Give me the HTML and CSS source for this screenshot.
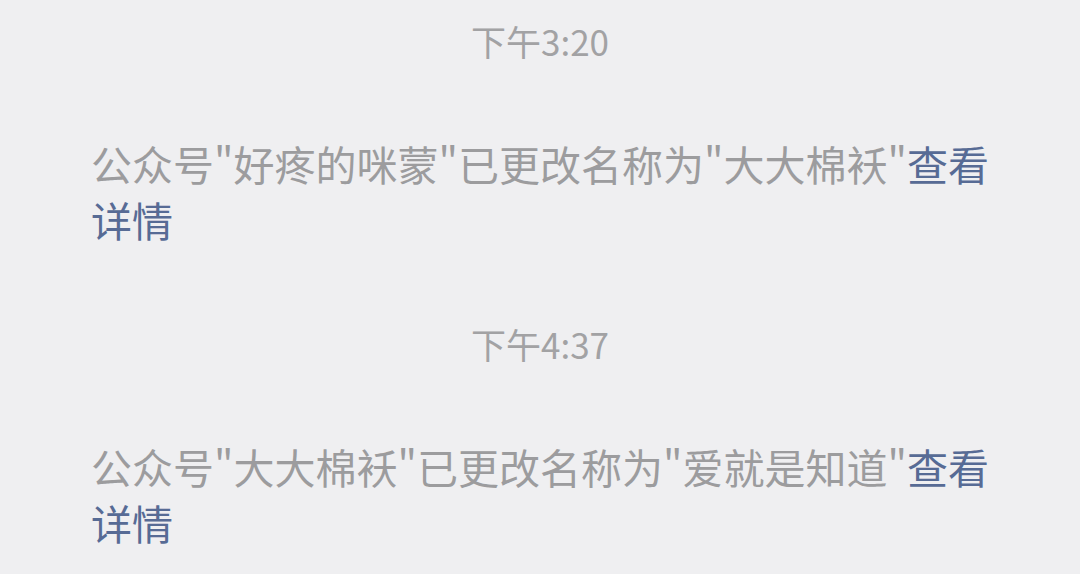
FILE: index.html
```html
<!DOCTYPE html>
<html lang="zh-CN">
<head>
<meta charset="utf-8">
<link rel="stylesheet" href="styles.css">
</head>
<body>
<main class="chat">
  <div class="time">下午3:20</div>
  <p class="notice">公众号"好疼的咪蒙"已更改名称为"大大棉袄"<span class="link">查看详情</span></p>
  <div class="time">下午4:37</div>
  <p class="notice">公众号"大大棉袄"已更改名称为"爱就是知道"<span class="link">查看详情</span></p>
</main>
</body>
</html>
```
FILE: styles.css
```css
html, body {
  margin: 0;
  padding: 0;
  background: #efeff1;
}
body {
  width: 1080px;
  height: 574px;
  overflow: hidden;
  font-family: "Noto Sans CJK SC", "Noto Sans", sans-serif;
}
.chat {
  display: flex;
  flex-direction: column;
  padding: 13px 70px 0 91px;
}
.time {
  text-align: center;
  margin-left: -21px;
  font-size: 35px;
  line-height: 56px;
  color: #a2a2a4;
}
.notice {
  margin: 66px 0 69px;
  font-size: 41px;
  line-height: 56px;
  color: #9c9c9e;
}
.notice:last-child {
  margin-bottom: 0;
}
.link {
  color: #576b95;
}
```
